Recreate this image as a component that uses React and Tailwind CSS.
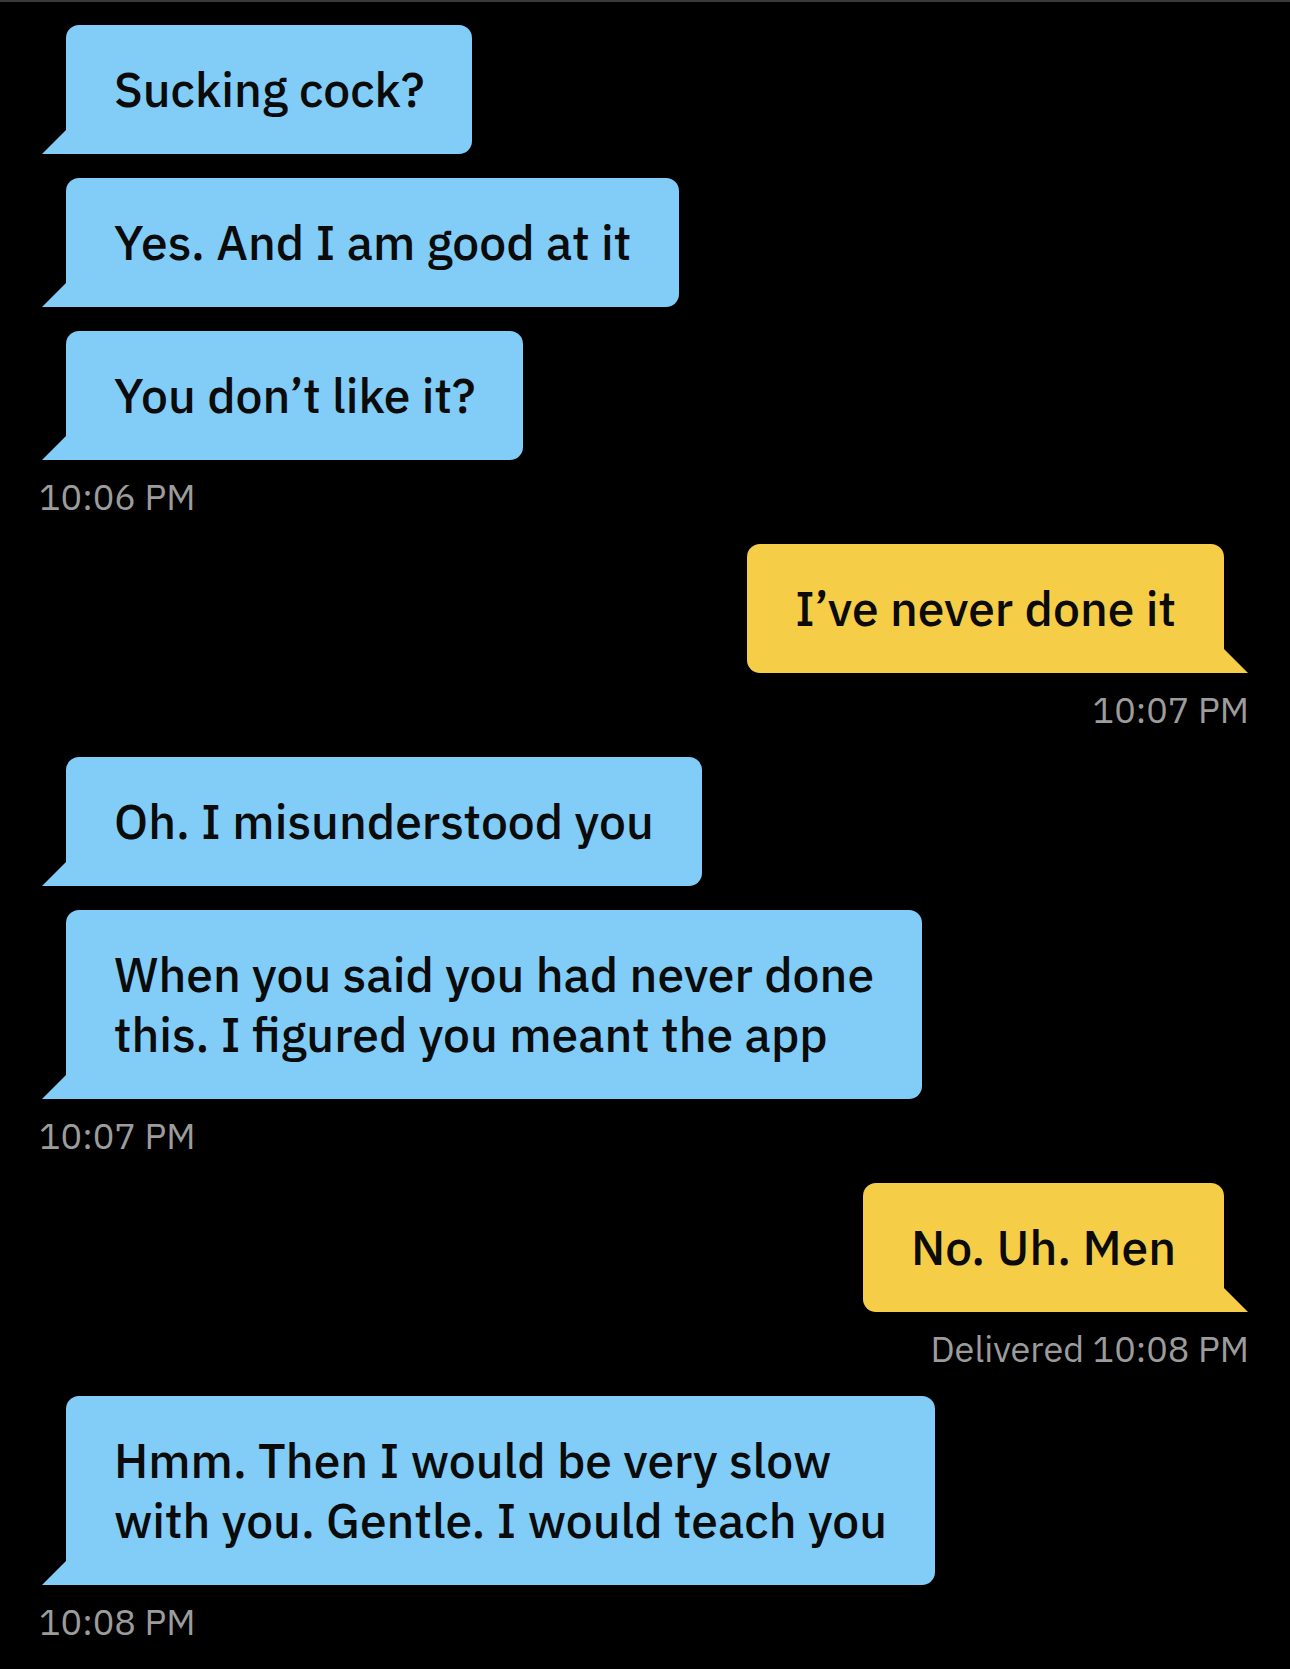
import React from 'react';

// --- Chat data ---
const groups = [
    { side: 'them', bubbles: [['Sucking cock?'], ['Yes. And I am good at it'], ['You don’t like it?']], time: '10:06 PM' },
    { side: 'me', bubbles: [['I’ve never done it']], time: '10:07 PM' },
    { side: 'them', bubbles: [['Oh. I misunderstood you'], ['When you said you had never done', 'this. I figured you meant the app']], time: '10:07 PM' },
    { side: 'me', bubbles: [['No. Uh. Men']], time: 'Delivered 10:08 PM' },
    { side: 'them', bubbles: [['Hmm. Then I would be very slow', 'with you. Gentle. I would teach you']], time: '10:08 PM' },
];

const font = { fontFamily: '"IBM Plex Sans", Roboto, "Liberation Sans", sans-serif' };

const Bubble = ({ lines, side }) => {
    const mine = side === 'me';
    return (
        <div
            className={
                mine
                    ? 'relative inline-block rounded-[13px] rounded-br-none bg-[#f5cd47] px-[48px] pt-[34px] pb-[35px] text-[48px] font-medium leading-[60px] text-[#0b0b0b] whitespace-nowrap'
                    : 'relative inline-block rounded-[13px] rounded-bl-none bg-[#81cdf8] px-[48px] pt-[34px] pb-[35px] text-[48px] font-medium leading-[60px] text-[#0b0b0b] whitespace-nowrap'
            }
        >
            {lines.map((l, i) => (
                <div key={i}>{l}</div>
            ))}
            {/* tail */}
            {mine ? (
                <svg className="absolute bottom-0 right-[-24px]" width="24" height="24" viewBox="0 0 24 24">
                    <polygon points="0,0 24,24 0,24" fill="#f5cd47" />
                </svg>
            ) : (
                <svg className="absolute bottom-0 left-[-24px]" width="24" height="24" viewBox="0 0 24 24">
                    <polygon points="24,0 0,24 24,24" fill="#81cdf8" />
                </svg>
            )}
        </div>
    );
};

export default function App() {
    return (
        <div className="min-h-[1669px] w-full bg-black border-t-2 border-[#3a3a3a]" style={font}>
            <div className="flex flex-col pt-[23px]">
                {groups.map((g, gi) => (
                    <div key={gi} className={gi === 0 ? 'flex flex-col' : 'flex flex-col mt-[27px]'}>
                        <div
                            className={
                                g.side === 'me'
                                    ? 'flex flex-col items-end gap-[24px] pr-[66px]'
                                    : 'flex flex-col items-start gap-[24px] pl-[66px]'
                            }
                        >
                            {g.bubbles.map((b, bi) => (
                                <Bubble key={bi} lines={b} side={g.side} />
                            ))}
                        </div>
                        <div
                            className={
                                g.side === 'me'
                                    ? 'mt-[17px] h-[40px] pr-[41px] text-right text-[36px] leading-[40px] text-[#9c9c9c]'
                                    : 'mt-[17px] h-[40px] pl-[39px] text-[36px] leading-[40px] text-[#9c9c9c]'
                            }
                        >
                            {g.time}
                        </div>
                    </div>
                ))}
            </div>
        </div>
    );
}
